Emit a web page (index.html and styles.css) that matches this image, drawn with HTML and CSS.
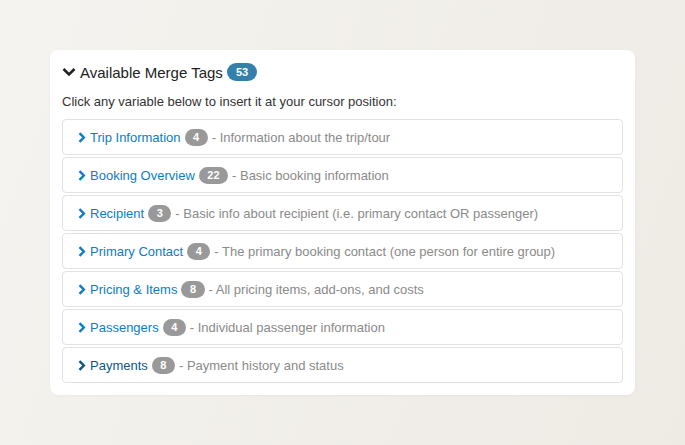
FILE: index.html
```html
<!DOCTYPE html>
<html lang="en">
<head>
    <meta charset="UTF-8">
    <meta name="viewport" content="width=device-width, initial-scale=1.0">
    <title>Available Merge Tags</title>
    <link rel="stylesheet" href="styles.css">
</head>
<body>

    <div class="merge-card">
        <div class="merge-header">
            <svg class="chevron-down" viewBox="0 0 14 10" width="14" height="10"><path d="M1.5 2 L7 7.5 L12.5 2" fill="none" stroke="#222" stroke-width="2.6"/></svg>
            <span class="merge-title">Available Merge Tags</span>
            <span class="badge badge-blue">53</span>
        </div>
        <p class="merge-help">Click any variable below to insert it at your cursor position:</p>

        <div class="group-list">
            <div class="group-row">
                <svg class="chevron-right" viewBox="0 0 8 11" width="8" height="11"><path d="M1.5 1.2 L5.8 5.5 L1.5 9.8" fill="none" stroke="currentColor" stroke-width="2.4"/></svg>
                <span class="group-name">Trip Information</span>
                <span class="badge">4</span>
                <span class="group-desc">- Information about the trip/tour</span>
            </div>
            <div class="group-row">
                <svg class="chevron-right" viewBox="0 0 8 11" width="8" height="11"><path d="M1.5 1.2 L5.8 5.5 L1.5 9.8" fill="none" stroke="currentColor" stroke-width="2.4"/></svg>
                <span class="group-name">Booking Overview</span>
                <span class="badge">22</span>
                <span class="group-desc">- Basic booking information</span>
            </div>
            <div class="group-row">
                <svg class="chevron-right" viewBox="0 0 8 11" width="8" height="11"><path d="M1.5 1.2 L5.8 5.5 L1.5 9.8" fill="none" stroke="currentColor" stroke-width="2.4"/></svg>
                <span class="group-name">Recipient</span>
                <span class="badge">3</span>
                <span class="group-desc">- Basic info about recipient (i.e. primary contact OR passenger)</span>
            </div>
            <div class="group-row">
                <svg class="chevron-right" viewBox="0 0 8 11" width="8" height="11"><path d="M1.5 1.2 L5.8 5.5 L1.5 9.8" fill="none" stroke="currentColor" stroke-width="2.4"/></svg>
                <span class="group-name">Primary Contact</span>
                <span class="badge">4</span>
                <span class="group-desc">- The primary booking contact (one person for entire group)</span>
            </div>
            <div class="group-row">
                <svg class="chevron-right" viewBox="0 0 8 11" width="8" height="11"><path d="M1.5 1.2 L5.8 5.5 L1.5 9.8" fill="none" stroke="currentColor" stroke-width="2.4"/></svg>
                <span class="group-name">Pricing &amp; Items</span>
                <span class="badge">8</span>
                <span class="group-desc">- All pricing items, add-ons, and costs</span>
            </div>
            <div class="group-row">
                <svg class="chevron-right" viewBox="0 0 8 11" width="8" height="11"><path d="M1.5 1.2 L5.8 5.5 L1.5 9.8" fill="none" stroke="currentColor" stroke-width="2.4"/></svg>
                <span class="group-name">Passengers</span>
                <span class="badge">4</span>
                <span class="group-desc">- Individual passenger information</span>
            </div>
            <div class="group-row hovered">
                <svg class="chevron-right" viewBox="0 0 8 11" width="8" height="11"><path d="M1.5 1.2 L5.8 5.5 L1.5 9.8" fill="none" stroke="currentColor" stroke-width="2.4"/></svg>
                <span class="group-name">Payments</span>
                <span class="badge">8</span>
                <span class="group-desc">- Payment history and status</span>
            </div>
        </div>
    </div>

</body>
</html>
```

FILE: styles.css
```css
/* --- General Setup --- */
:root {
    --link-color: #0e7cc3;
    --link-hover: #0d5687;
    --badge-gray: #999;
    --text-color: #333;
}

body {
    font-family: 'Liberation Sans', Arial, sans-serif;
    margin: 0;
    height: 445px;
    padding: 50px 50px 0 50px;
    box-sizing: border-box;
    background-color: #f1eee9;
    background-image: linear-gradient(110deg, #f5f3ef, #eeebe5);
    color: var(--text-color);
}

/* --- Card --- */
.merge-card {
    background-color: #ffffff;
    border-radius: 8px;
    padding: 12px 12px 12px 12px;
    width: 585px;
    box-sizing: border-box;
    box-shadow: 0 1px 3px rgba(0, 0, 0, 0.04);
}

.merge-header {
    display: flex;
    align-items: center;
    height: 20px;
}

.chevron-down {
    margin-right: 4px;
}

.merge-title {
    font-size: 15px;
    color: #222;
}

.merge-help {
    font-size: 13px;
    margin: 12px 0 10px 0;
    color: #333;
}

/* --- Badges --- */
.badge {
    display: inline-block;
    background-color: var(--badge-gray);
    color: #fff;
    font-size: 11px;
    font-weight: 700;
    line-height: 17px;
    padding: 0 8.5px;
    border-radius: 9px;
    margin: 0 4px;
}

.badge-blue {
    background-color: #3380ab;
    line-height: 18px;
    padding: 0 9px;
}

/* --- Group rows --- */
.group-list {
    display: flex;
    flex-direction: column;
    gap: 2px;
}

.group-row {
    display: flex;
    align-items: center;
    height: 36px;
    box-sizing: border-box;
    border: 1px solid #e2e2e2;
    border-radius: 4px;
    padding-left: 15px;
    font-size: 13px;
    color: var(--link-color);
}

.chevron-right {
    margin-right: 4px;
}

.group-name {
    color: var(--link-color);
}

.group-desc {
    color: #8a8a8a;
}

.group-row.hovered,
.group-row.hovered .group-name {
    color: var(--link-hover);
}
```
